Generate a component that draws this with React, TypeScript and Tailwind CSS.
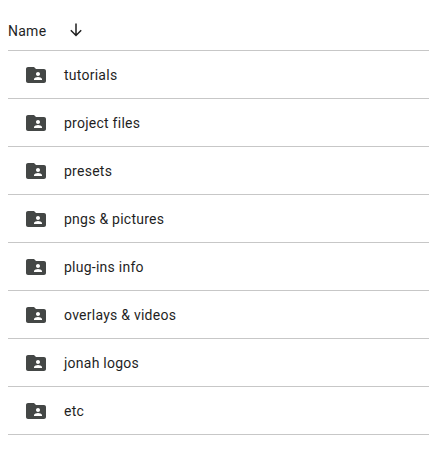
const folders = [
  "tutorials",
  "project files",
  "presets",
  "pngs & pictures",
  "plug-ins info",
  "overlays & videos",
  "jonah logos",
  "etc",
];

function SharedFolderIcon() {
  return (
    <svg width="24" height="24" viewBox="0 0 24 24" fill="#444746" aria-hidden="true">
      <path d="M20 6h-8l-2-2H4c-1.1 0-1.99.9-1.99 2L2 18c0 1.1.9 2 2 2h16c1.1 0 2-.9 2-2V8c0-1.1-.9-2-2-2zm-6 3c1.1 0 2 .9 2 2s-.9 2-2 2-2-.9-2-2 .9-2 2-2zm4 8h-8v-1c0-1.33 2.67-2 4-2s4 .67 4 2v1z" />
    </svg>
  );
}

export default function App() {
  return (
    <div className="h-[455px] w-[429px] overflow-hidden bg-white pl-2 font-['Roboto',sans-serif] text-[14px] font-[450] tracking-[0.25px] text-[#1f1f1f]">
      {/* Header row */}
      <div className="flex h-[51px] items-center border-b border-[#c7c7c7] pt-[12px]">
        <span>Name</span>
        <svg className="ml-[22px] mt-[-2px]" width="16" height="16" viewBox="0 0 16 16" fill="none" stroke="#1f1f1f" strokeWidth="1.5" aria-hidden="true">
          <path d="M8 1.5v12M2.8 8.3 8 13.5l5.2-5.2" />
        </svg>
      </div>

      {folders.map((name) => (
        <div key={name} className="flex h-[48px] items-center border-b border-[#c7c7c7]">
          <span className="ml-4 flex">
            <SharedFolderIcon />
          </span>
          <span className="ml-[16px] pt-[2px]">{name}</span>
        </div>
      ))}
    </div>
  );
}
